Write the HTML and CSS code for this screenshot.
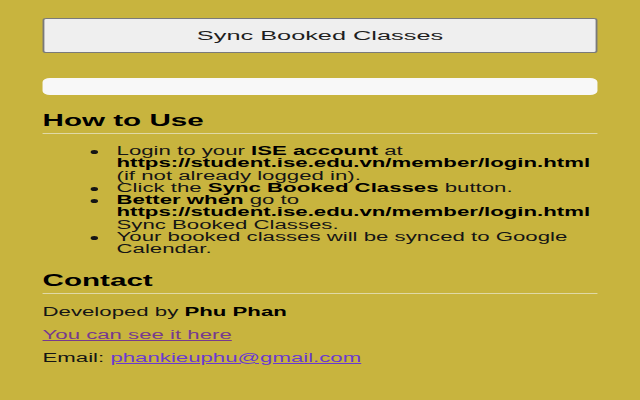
FILE: index.html
```html
<!DOCTYPE html>
<html>
<head>
<meta charset="utf-8">
<link rel="stylesheet" href="styles.css">
</head>
<body>
<div class="popup">
  <button class="sync-btn">Sync Booked Classes</button>
  <div class="progress"></div>
  <h2 class="section-title first">How to Use</h2>
  <ul class="steps">
    <li>Login to your <b>ISE account</b> at <b>https://student.ise.edu.vn/member/login.html</b> (if not already logged in).</li>
    <li>Click the <b>Sync Booked Classes</b> button.</li>
    <li><b>Better when</b> go to <b>https://student.ise.edu.vn/member/login.html</b> Sync Booked Classes.</li>
    <li>Your booked classes will be synced to Google Calendar.</li>
  </ul>
  <h2 class="section-title">Contact</h2>
  <p class="contact-line first-line">Developed by <b>Phu Phan</b></p>
  <p class="contact-line"><a class="visited" href="#">You can see it here</a></p>
  <p class="contact-line">Email: <a class="mail" href="#">phankieuphu@gmail.com</a></p>
</div>
</body>
</html>
```
FILE: styles.css
```css
html, body {
  margin: 0;
  padding: 0;
  background: #c8b43e;
  overflow: hidden;
}
body {
  width: 640px;
  height: 400px;
}
.popup {
  box-sizing: border-box;
  width: 346px;
  padding: 18px 23px 0 23px;
  transform: scaleX(1.8497);
  transform-origin: 0 0;
  font-family: "Liberation Sans", Arial, sans-serif;
  font-size: 12px;
  color: #151515;
}
.sync-btn {
  display: block;
  box-sizing: border-box;
  width: 100%;
  height: 35px;
  margin: 0;
  padding: 0;
  background: #efefef;
  border: 1px solid #7a7a7a;
  border-radius: 2px;
  font-family: "Liberation Sans", Arial, sans-serif;
  font-size: 13.7px;
  color: #1e1e1e;
}
.progress {
  margin-top: 25px;
  height: 17px;
  background: #f8f8f8;
  border-radius: 4px;
}
.section-title {
  margin: 15px 0 0 0;
  padding-bottom: 3px;
  border-bottom: 1px solid #e0d9a6;
  font-size: 16px;
  line-height: 19px;
  font-weight: bold;
  color: #000;
}
.section-title.first {
  margin-top: 16px;
}
.steps {
  margin: 11px 0 0 0;
  padding-left: 40px;
  line-height: 12.3px;
}
.steps b {
  color: #000;
}
.contact-line {
  margin: 9px 0 0 0;
  line-height: 14px;
}
.contact-line.first-line {
  margin-top: 11px;
}
.contact-line b {
  color: #000;
}
.visited {
  color: #773a8f;
}
.mail {
  color: #6a3ad0;
}
```
